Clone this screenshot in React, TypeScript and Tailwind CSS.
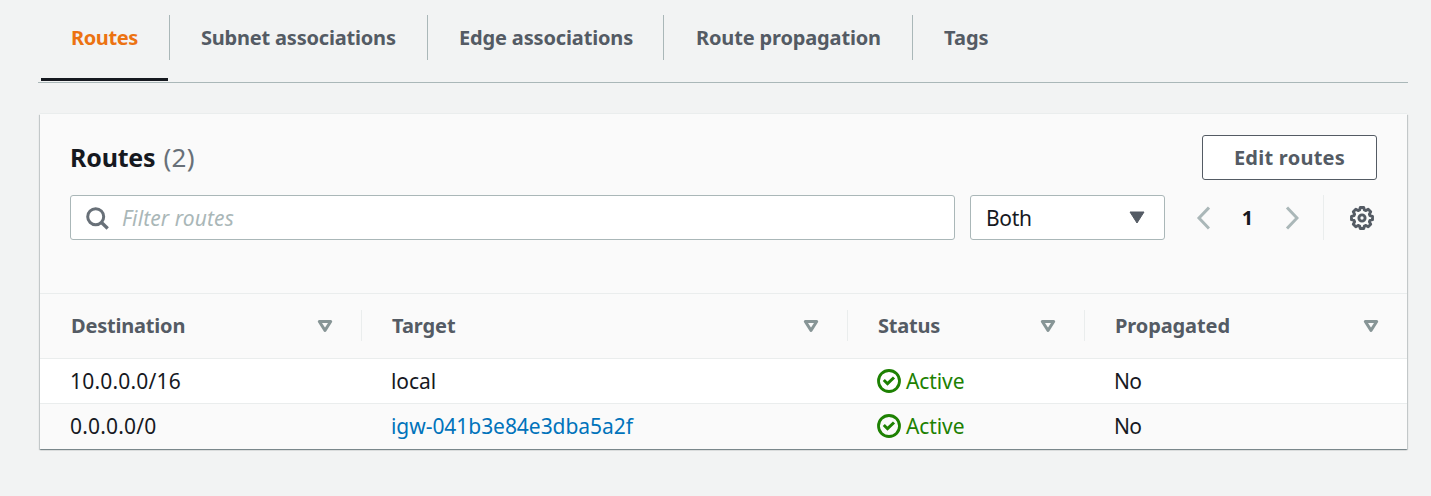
import type { ReactNode } from "react";

const tabs = [
  { label: "Routes", box: "w-[129px] pl-[30px]", text: "text-[#ec7211] tracking-[-0.4px]", active: true },
  { label: "Subnet associations", box: "w-[258px] pl-[31px]", text: "text-[#545b64] tracking-[-0.2px]" },
  { label: "Edge associations", box: "w-[236px] pl-[31px]", text: "text-[#545b64] tracking-[-0.15px]" },
  { label: "Route propagation", box: "w-[249px] pl-[32px]", text: "text-[#545b64] tracking-[-0.15px]" },
  { label: "Tags", box: "w-[120px] pl-[31px]", text: "text-[#545b64]" },
];

const columns = [
  { label: "Destination", pad: "pl-[31px] pr-[28px]", text: "tracking-[-0.2px]" },
  { label: "Target", pad: "pl-[30px] pr-[28px]", text: "tracking-[-0.05px]" },
  { label: "Status", pad: "pl-[30px] pr-[28px]", text: "tracking-[-0.2px]" },
  { label: "Propagated", pad: "pl-[30px] pr-[28px]", text: "tracking-[-0.1px]" },
];

const rows = [
  { destination: "10.0.0.0/16", target: "local", link: false },
  { destination: "0.0.0.0/0", target: "igw-041b3e84e3dba5a2f", link: true },
];

const grid = "grid grid-cols-[322px_486px_237px_322px]";

function SortIcon() {
  return (
    <svg className="mt-px" width="16" height="14" viewBox="0 0 16 14" fill="none" stroke="#879596" strokeWidth="3" strokeLinejoin="round">
      <path d="M2.3 2.5h11.4L8 11.4z" />
    </svg>
  );
}

function CheckIcon() {
  return (
    <svg width="24" height="24" viewBox="0 0 24 24" fill="none" stroke="#1d8102" strokeWidth="3">
      <circle cx="12" cy="12" r="10.5" strokeWidth="2.8" />
      <path d="M6.8 11l3.7 3.7 6.5-6.2" />
    </svg>
  );
}

function Chevron({ d }: { d: string }) {
  return (
    <svg width="14" height="24" viewBox="0 0 14 24" fill="none" stroke="#aab7b8" strokeWidth="3">
      <path d={d} />
    </svg>
  );
}

function GearIcon() {
  return (
    <svg width="24" height="24" viewBox="0 0 24 24" fill="none" stroke="#545b64" strokeWidth="2.9" strokeLinejoin="round">
      <path d="M10.3 1.5h3.4l.7 2.500 1.500.6 2.300-1.300 2.500 2.500-1.300 2.300.6 1.500 2.500.7v3.400l-2.500.7-.6 1.500 1.300 2.300-2.500 2.500-2.300-1.300-1.500.6-.7 2.500h-3.400l-.7-2.500-1.500-.6-2.300 1.300-2.500-2.500 1.300-2.300-.6-1.500-2.500-.7v-3.400l2.500-.7.6-1.500-1.300-2.300 2.500-2.500 2.300 1.300 1.500-.6z" />
      <circle cx="12" cy="12" r="3.1" />
    </svg>
  );
}

function Cell({ children, className = "" }: { children: ReactNode; className?: string }) {
  return <div className={`flex items-center whitespace-nowrap ${className}`}>{children}</div>;
}

export default function App() {
  return (
    <div className="h-[496px] w-[1431px] overflow-hidden bg-[#f2f3f3] font-['Noto_Sans',sans-serif] text-[21px] leading-[30px] text-[#16191f]">
      <nav className="ml-[38px] flex h-[83px] w-[1370px] border-b border-[#aab7b8] pl-[3px]">
        {tabs.map((tab, i) => (
          <div key={tab.label} className="flex flex-col justify-between pt-[15px]">
            <div className={`flex h-[45px] items-center border-[#aab7b8] text-[20px] leading-[29px] font-bold whitespace-nowrap ${i < 4 ? "border-r" : ""} ${tab.box} ${tab.text}`}>
              {tab.label}
            </div>
            {tab.active && <div className="mb-[1px] h-[3px] w-[127px] bg-[#16191f]" />}
          </div>
        ))}
      </nav>

      <section className="mt-[31px] ml-[40px] h-[335px] w-[1367px] bg-[#fafafa] shadow-[0_-1px_0_0_#eaeded,0_1px_1px_0_rgba(0,28,36,0.3),1px_1px_1px_0_rgba(0,28,36,0.15),-1px_1px_1px_0_rgba(0,28,36,0.15)]">
        <header className="flex h-[66px] items-end justify-between pr-[30px] pl-[30px]">
          <h2 className="flex h-[45px] items-center gap-[8px] pb-px">
            <span className="text-[25px] leading-[30px] font-bold tracking-[-0.2px]">Routes</span>
            <span className="text-[26px] leading-[30px] tracking-[0.3px] text-[#687078]">(2)</span>
          </h2>
          <button className="flex h-[45px] w-[175px] items-center justify-center rounded-[3px] border border-[#545b64] bg-white text-[20px] leading-[29px] font-bold tracking-[0.25px] whitespace-nowrap text-[#545b64]">
            Edit routes
          </button>
        </header>

        <div className="mt-[15px] flex h-[45px] pl-[30px]">
          <div className="flex w-[885px] items-center rounded-[3px] border border-[#aab7b8] bg-white pl-[14px]">
            <svg width="24" height="24" viewBox="0 0 24 24" fill="none" stroke="#687078" strokeWidth="3">
              <circle cx="10.7" cy="10.7" r="8" />
              <path d="M16 16l6.7 6.5" strokeWidth="3.3" />
            </svg>
            <span className="ml-[13px] pt-px tracking-[0.1px] text-[#aab7b8] italic">Filter routes</span>
          </div>
          <div className="ml-[15px] flex w-[195px] items-center justify-between rounded-[3px] border border-[#aab7b8] bg-white pr-[19px] pl-[15px]">
            <span className="pt-px tracking-[-0.3px]">Both</span>
            <svg width="16" height="13" viewBox="0 0 16 13" fill="#545b64" stroke="#545b64" strokeLinejoin="round">
              <path d="M1 1h14L8 12z" />
            </svg>
          </div>
          <div className="ml-[31px] flex w-[128px] items-center border-r border-[#eaeded]">
            <Chevron d="M13 1.500L3 12l10 10.500" />
            <span className="w-[75px] text-center text-[20px] leading-[29px] font-bold">1</span>
            <Chevron d="M2 1.500L12 12 2 22.500" />
          </div>
          <div className="ml-[26px] flex items-center">
            <GearIcon />
          </div>
        </div>

        <div className={`mt-[53px] h-[66px] border-y border-[#eaeded] ${grid}`}>
          {columns.map((column, i) => (
            <div key={column.label} className={`mt-[16px] flex h-[31px] items-center justify-between border-[#eaeded] text-[20px] leading-[29px] font-bold text-[#545b64] ${i < 3 ? "border-r" : ""} ${column.pad}`}>
              <span className={column.text}>{column.label}</span>
              <SortIcon />
            </div>
          ))}
        </div>
        {rows.map((row, i) => (
          <div key={row.destination} className={`${grid} ${i === 0 ? "h-[45px] border-b border-[#eaeded] bg-white" : "h-[44px]"}`}>
            <Cell className="pl-[30px] tracking-[0.2px]">{row.destination}</Cell>
            <Cell className={`pl-[29px] tracking-[-0.05px] ${row.link ? "text-[#0073bb]" : ""}`}>{row.target}</Cell>
            <Cell className="gap-[5px] pl-[29px] tracking-[-0.1px] text-[#1d8102]">
              <CheckIcon />
              <span>Active</span>
            </Cell>
            <Cell className="pl-[29px] tracking-[-0.7px]">No</Cell>
          </div>
        ))}
      </section>
    </div>
  );
}
